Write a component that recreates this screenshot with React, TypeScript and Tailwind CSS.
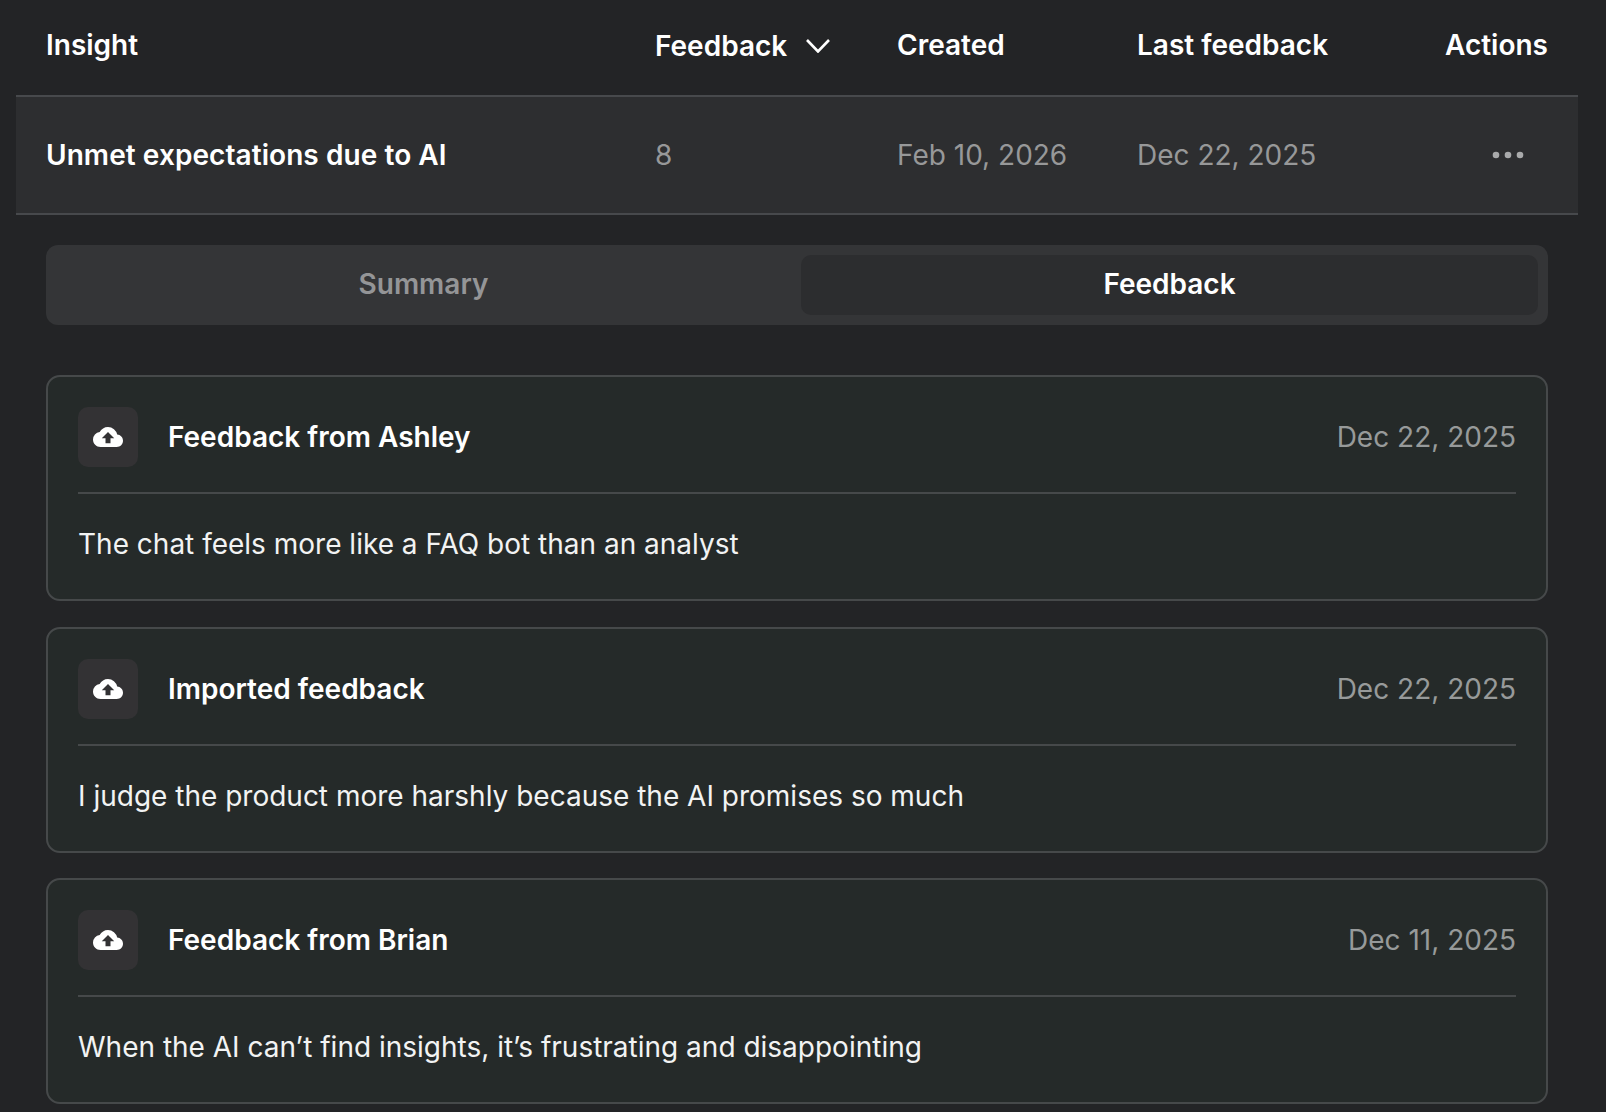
import { MdCloudUpload } from 'react-icons/md';

const feedback = [
  { title: 'Feedback from Ashley', date: 'Dec 22, 2025', body: 'The chat feels more like a FAQ bot than an analyst' },
  { title: 'Imported feedback', date: 'Dec 22, 2025', body: 'I judge the product more harshly because the AI promises so much' },
  { title: 'Feedback from Brian', date: 'Dec 11, 2025', body: 'When the AI can\u2019t find insights, it\u2019s frustrating and disappointing' },
];

function FeedbackCard({ title, date, body }: { title: string; date: string; body: string }) {
  return (
    <div className="h-[226px] rounded-[14px] border-2 border-[#46494a] bg-[#252a29] px-[30px] pt-[30px]">
      <div className="flex items-center justify-between border-b-2 border-[#46494a] pb-[25px]">
        <div className="flex items-center gap-[30px]">
          <div className="flex h-[60px] w-[60px] items-center justify-center rounded-[10px] bg-[#333234] text-white">
            <MdCloudUpload size={30} />
          </div>
          <span className="text-[28px] font-semibold text-white">{title}</span>
        </div>
        <span className="text-[28px] text-[#979a9a]">{date}</span>
      </div>
      <p className="mt-[30px] text-[28px] leading-[40px] text-[#f2f3f3]">{body}</p>
    </div>
  );
}

export default function App() {
  return (
    <div className="h-[1112px] overflow-hidden bg-[#232426] pl-4 pr-7 font-['Inter',sans-serif]">
      <div className="flex h-[97px] items-center border-b-2 border-[#47494c] pb-[5px] text-[28px] font-semibold text-white">
        <div className="w-[639px] pl-[30px]">Insight</div>
        <div className="flex w-[242px] items-center gap-[19px] pt-[1px]">
          Feedback
          <svg width="24" height="14" viewBox="0 0 24 14" fill="none" stroke="currentColor" strokeWidth="2.6">
            <polyline points="1,1 12,12.5 23,1" />
          </svg>
        </div>
        <div className="w-[240px]">Created</div>
        <div className="flex-1">Last feedback</div>
        <div className="pr-[30px]">Actions</div>
      </div>

      <div className="flex h-[118px] items-center border-b-2 border-[#47494c] bg-[#2d2e30] text-[28px] text-[#979899]">
        <div className="w-[639px] pl-[30px] font-semibold tracking-[0.07px] text-white">Unmet expectations due to AI</div>
        <div className="w-[242px]">8</div>
        <div className="w-[240px]">Feb 10, 2026</div>
        <div className="flex-1">Dec 22, 2025</div>
        <svg className="mr-[54px] text-[#a9aaab]" width="32" height="8" viewBox="0 0 32 8" fill="currentColor">
          <circle cx="4" cy="4" r="3.3" />
          <circle cx="16" cy="4" r="3.3" />
          <circle cx="28" cy="4" r="3.3" />
        </svg>
      </div>

      <div className="mt-[30px] mr-[30px] ml-[30px] grid h-[80px] grid-cols-2 gap-[8px] rounded-[12px] bg-[#343537] p-[10px] text-[28px] font-semibold">
        <div className="flex items-center justify-center pr-[2px] pb-[2px] text-[#949597]">Summary</div>
        <div className="flex items-center justify-center rounded-[10px] bg-[#2c2d2f] pb-[2px] text-white">Feedback</div>
      </div>

      <div className="mt-[50px] mr-[30px] ml-[30px] flex flex-col gap-[25.5px]">
        {feedback.map((item) => (
          <FeedbackCard key={item.title} {...item} />
        ))}
      </div>
    </div>
  );
}
